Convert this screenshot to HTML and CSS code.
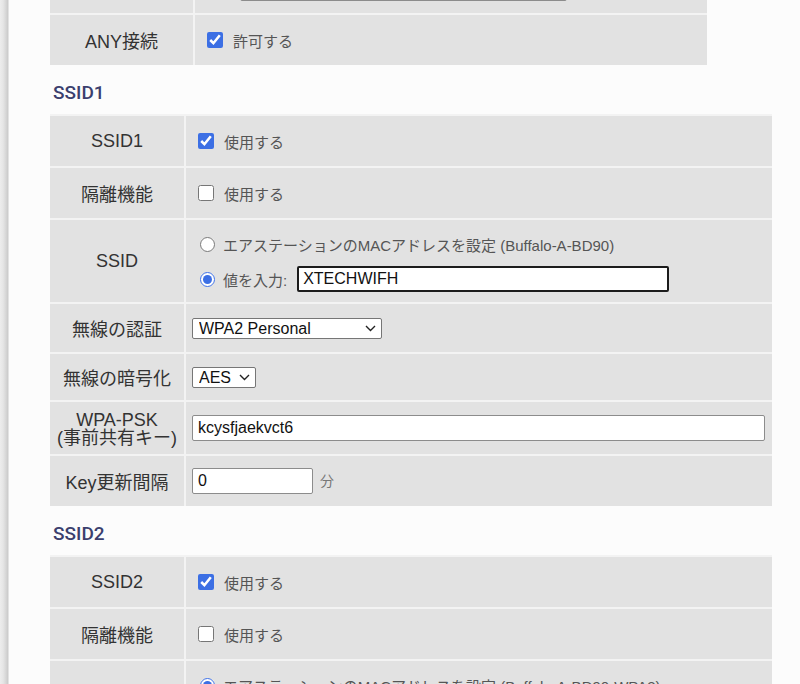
FILE: index.html
```html
<!DOCTYPE html>
<html lang="ja">
<head>
<meta charset="utf-8">
<title>無線設定</title>
<link rel="stylesheet" href="styles.css">
</head>
<body>
<div class="page">
  <table class="form narrow">
    <tr>
      <th></th>
      <td><input class="txt top-input" type="text" value=""></td>
    </tr>
    <tr>
      <th>ANY接続</th>
      <td><label class="opt"><input class="cb" type="checkbox" checked>許可する</label></td>
    </tr>
  </table>

  <h2 class="sec">SSID1</h2>
  <table class="form wide">
    <tr>
      <th>SSID1</th>
      <td><label class="opt"><input class="cb" type="checkbox" checked>使用する</label></td>
    </tr>
    <tr>
      <th>隔離機能</th>
      <td><label class="opt"><input class="cb" type="checkbox">使用する</label></td>
    </tr>
    <tr class="tall">
      <th>SSID</th>
      <td>
        <div class="radios">
          <label class="ropt"><input class="rb" type="radio" name="s1">エアステーションのMACアドレスを設定 (Buffalo-A-BD90)</label>
          <label class="ropt"><input class="rb" type="radio" name="s1" checked>値を入力:<input class="txt focus ssid-input" type="text" value="XTECHWIFH"></label>
        </div>
      </td>
    </tr>
    <tr class="h50">
      <th>無線の認証</th>
      <td>
        <span class="selwrap">
          <select class="sel sel-auth"><option>WPA2 Personal</option></select>
          <svg class="chev" width="11" height="7" viewBox="0 0 11 7"><polyline points="1,1 5.5,5.5 10,1" fill="none" stroke="#222" stroke-width="1.4"/></svg>
        </span>
      </td>
    </tr>
    <tr class="h48">
      <th>無線の暗号化</th>
      <td>
        <span class="selwrap">
          <select class="sel sel-enc"><option>AES</option></select>
          <svg class="chev" width="11" height="7" viewBox="0 0 11 7"><polyline points="1,1 5.5,5.5 10,1" fill="none" stroke="#222" stroke-width="1.4"/></svg>
        </span>
      </td>
    </tr>
    <tr class="h54">
      <th class="two">WPA-PSK<br>(事前共有キー)</th>
      <td><input class="txt psk-input" type="text" value="kcysfjaekvct6"></td>
    </tr>
    <tr>
      <th>Key更新間隔</th>
      <td><input class="txt key-input" type="text" value="0"><span class="unit">分</span></td>
    </tr>
  </table>

  <h2 class="sec">SSID2</h2>
  <table class="form wide">
    <tr>
      <th>SSID2</th>
      <td><label class="opt"><input class="cb" type="checkbox" checked>使用する</label></td>
    </tr>
    <tr>
      <th>隔離機能</th>
      <td><label class="opt"><input class="cb" type="checkbox">使用する</label></td>
    </tr>
    <tr class="tall">
      <th>SSID</th>
      <td>
        <div class="radios">
          <label class="ropt"><input class="rb" type="radio" name="s2" checked>エアステーションのMACアドレスを設定 (Buffalo-A-BD90-WPA3)</label>
          <label class="ropt"><input class="rb" type="radio" name="s2">値を入力:<input class="txt ssid-input" type="text" value=""></label>
        </div>
      </td>
    </tr>
  </table>
</div>
</body>
</html>
```
FILE: styles.css
```css
* { box-sizing: border-box; }

html {
  background: #fcfcfc;
}

body {
  margin: 0;
  min-height: 100vh;
  background: linear-gradient(to right, #ededed 0, #e6e6e6 3px, #d6d6d6 6px, #cacaca 8px, #fcfcfc 9px) left top / 9px 100% repeat-y;
  font-family: "Liberation Sans", "Noto Sans CJK JP", sans-serif;
  color: #333;
  overflow: hidden;
}

.page {
  margin-top: -37px;
  padding-left: 50px;
}

.form {
  border-collapse: separate;
  border-spacing: 0;
  background: #e2e2e2;
}

.narrow { width: 657px; }
.wide { width: 722px; }

.form th,
.form td {
  border-top: 2px solid #f3f3f3;
  height: 52px;
  vertical-align: middle;
}

.narrow tr:first-child > * { height: 50px; border-top: 0; }

.form th {
  font-weight: normal;
  font-size: 18px;
  color: #333;
  text-align: center;
  border-right: 2px solid #f3f3f3;
  padding: 0;
  white-space: nowrap;
}

.narrow th { width: 145px; }
.wide th { width: 136px; }

.form th.two {
  line-height: 18px;
  padding-top: 2px;
}

.form td {
  padding: 0 6px;
  font-size: 15px;
  color: #555;
  white-space: nowrap;
}

.form tr.tall > * { height: 84px; }
.form tr.h50 > * { height: 50px; }
.form tr.h48 > * { height: 48px; }
.form tr.h54 > * { height: 54px; }

.opt {
  display: flex;
  align-items: center;
  gap: 10px;
}

.cb {
  width: 16px;
  height: 16px;
  margin: 0 0 0 6px;
  accent-color: #3c6fe4;
}

.radios {
  display: flex;
  flex-direction: column;
  gap: 9px;
  padding-top: 1px;
}

.ropt {
  display: flex;
  align-items: center;
  gap: 8px;
  height: 26px;
}

.rb {
  width: 15px;
  height: 15px;
  margin: 0 0 0 8px;
  accent-color: #3c6fe4;
}

.txt {
  height: 26px;
  font-family: "Liberation Sans", "Noto Sans CJK JP", sans-serif;
  font-size: 16px;
  color: #111;
  background: #fff;
  border: 1px solid #8c8c8c;
  border-radius: 2px;
  padding: 0 5px;
  margin: 0;
}

.txt.focus {
  border: 2px solid #1c1c1c;
  padding: 0 4px;
}

.top-input { width: 327px; margin-left: 39px; }
.ssid-input { width: 372px; margin-left: 2px; }
.psk-input { width: 573px; }
.key-input { width: 121px; }

.unit {
  margin-left: 7px;
  color: #777;
  font-size: 14px;
}

.selwrap {
  position: relative;
  display: inline-block;
  vertical-align: middle;
}

.sel {
  appearance: none;
  -webkit-appearance: none;
  display: block;
  height: 21px;
  font-family: "Liberation Sans", "Noto Sans CJK JP", sans-serif;
  font-size: 16px;
  line-height: 19px;
  color: #111;
  background: #fff;
  border: 1px solid #767676;
  border-radius: 2px;
  padding: 0 20px 0 6px;
  margin: 0;
}

.chev {
  position: absolute;
  right: 6px;
  top: 7px;
  pointer-events: none;
}

.sel-auth { width: 190px; }
.sel-enc { width: 64px; }

.sec {
  margin: 0;
  padding: 17px 0 10px 3px;
  line-height: 22px;
  font-family: Roboto, "Liberation Sans", sans-serif;
  font-weight: 500;
  font-size: 19px;
  color: #3b3f6e;
}
```
